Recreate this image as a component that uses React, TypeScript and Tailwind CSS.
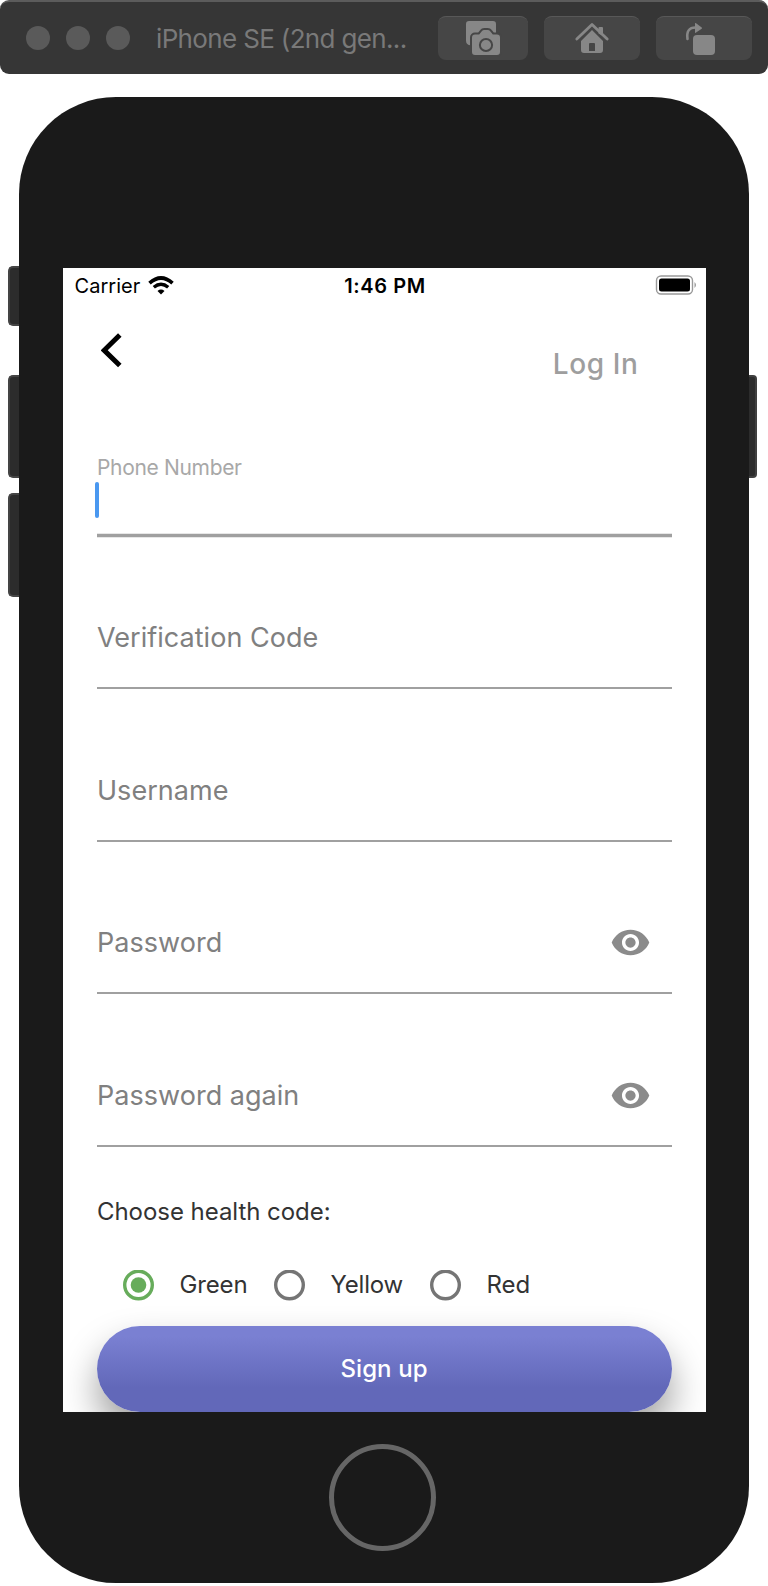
import React from "react";

function ToolButton({ className, children }: { className: string; children: React.ReactNode }) {
  return (
    <button
      className={`flex h-11 shrink-0 rounded-[8px] border-t border-[#585858] bg-[#464646] ${className}`}
    >
      {children}
    </button>
  );
}

function CameraIcon() {
  return (
    <svg width="90" height="44" viewBox="0 0 90 44" className="-mt-px">
      <path
        d="M31 5h24a3 3 0 0 1 3 3v14H32v7.200q-4-.3-4-4.700V8a3 3 0 0 1 3-3Z"
        fill="#878787"
      />
      <path
        d="M37 18.500h4.200l2.600-3.300q.9-1.200 2.500-1.200h3.400q1.600 0 2.500 1.200l2.600 3.300H59a3 3 0 0 1 3 3V36a3 3 0 0 1-3 3H37a3 3 0 0 1-3-3V21.500a3 3 0 0 1 3-3Z"
        fill="#878787"
        stroke="#464646"
        strokeWidth="4"
        paintOrder="stroke"
      />
      <circle cx="48" cy="29" r="6.100" fill="#878787" stroke="#464646" strokeWidth="2" />
    </svg>
  );
}

function HomeIcon() {
  return (
    <svg width="96" height="44" viewBox="0 0 96 44" className="-mt-px">
      <path
        d="M37 25 48 14 59 25v9a3 3 0 0 1-3 3h-5v-9a1 1 0 0 0-1-1h-4a1 1 0 0 0-1 1v9h-5a3 3 0 0 1-3-3Z"
        fill="#878787"
      />
      <path d="M44.500 35h7v2h-7Z" fill="#878787" />
      <path d="M54.500 17.500V12a1 1 0 0 1 1-1H58a1 1 0 0 1 1 1v8Z" fill="#878787" />
      <path
        d="M32.800 23 48 8.500 63.200 23"
        fill="none"
        stroke="#878787"
        strokeWidth="2.800"
        strokeLinecap="round"
        strokeLinejoin="round"
      />
    </svg>
  );
}

function RotateIcon() {
  return (
    <svg width="96" height="44" viewBox="0 0 96 44" className="-mt-px">
      <rect x="37" y="19" width="22" height="20" rx="4" fill="#878787" />
      <path d="M31.500 23q-1.700-11.500 8-11.500" fill="none" stroke="#878787" strokeWidth="2.600" strokeLinecap="round" />
      <path d="M39 7.500v9q0 .8.700.3l6-4.100q.8-.6 0-1.200l-6-4.400q-.7-.4-.7.400Z" fill="#878787" />
    </svg>
  );
}

function TitleBar() {
  return (
    <header className="flex h-[74px] items-center rounded-[9px] border-t-2 border-[#5c5c5c] bg-[#363636] pr-4 pl-[26px]">
      <div className="flex gap-4">
        <i className="size-6 rounded-full bg-[#5a5a5a]" />
        <i className="size-6 rounded-full bg-[#5a5a5a]" />
        <i className="size-6 rounded-full bg-[#5a5a5a]" />
      </div>
      <h1 className="ml-[26px] w-[282px] pt-[2px] text-[26px] leading-8 whitespace-nowrap tracking-[-0.650px] text-[#797979]">
        iPhone SE (2nd gen...
      </h1>
      <div className="flex gap-4">
        <ToolButton className="w-[90px]">
          <CameraIcon />
        </ToolButton>
        <ToolButton className="w-24">
          <HomeIcon />
        </ToolButton>
        <ToolButton className="w-24">
          <RotateIcon />
        </ToolButton>
      </div>
    </header>
  );
}

function StatusBar() {
  return (
    <div className="grid h-9 grid-cols-[1fr_auto_1fr] items-center pr-[9px] pl-[11px] text-[20px] leading-6 text-black">
      <div className="flex items-center gap-2">
        <span className="ml-px tracking-[0.050px]">Carrier</span>
        <svg width="26" height="19" viewBox="0 0 26 19">
          <path d="M1.500 7.200q11.500-10.400 23 0" fill="none" stroke="#000" strokeWidth="3.600" />
          <path d="M5.800 11.300q7.200-6 14.400 0" fill="none" stroke="#000" strokeWidth="3.400" />
          <path d="M9.500 15q3.500-2.800 7 0L13 18.600Z" fill="#000" />
        </svg>
      </div>
      <span className="font-semibold tracking-[0.600px]">1:46 PM</span>
      <svg width="42" height="20" viewBox="0 0 42 20" className="-mt-[2px] justify-self-end">
        <rect x="1.500" y="1" width="36" height="18" rx="4.500" fill="none" stroke="#999" strokeWidth="1.400" />
        <rect x="4" y="3.500" width="31" height="13" rx="2.500" fill="#000" />
        <path d="M39.500 7q3 3 0 6Z" fill="#999" />
      </svg>
    </div>
  );
}

function EyeIcon() {
  return (
    <svg width="41" height="41" viewBox="0 0 24 24" className="mr-[21px]">
      <path
        fill="#8b8b8b"
        d="M12 4.500C7 4.500 2.730 7.610 1 12c1.730 4.390 6 7.500 11 7.500s9.270-3.110 11-7.500c-1.730-4.390-6-7.500-11-7.500zM12 17c-2.760 0-5-2.240-5-5s2.240-5 5-5 5 2.240 5 5-2.240 5-5 5zm0-8c-1.660 0-3 1.340-3 3s1.340 3 3 3 3-1.340 3-3-1.340-3-3-3z"
      />
    </svg>
  );
}

function Field({ label, secure = false }: { label: string; secure?: boolean }) {
  return (
    <div className="flex h-[152.700px] flex-col justify-end">
      <div className="flex h-[101px] items-center justify-between border-b-2 border-[#a0a0a0] pl-[0.500px]">
        <span className="pt-px text-[27px] leading-8 tracking-[0.030px] text-[#808080]">{label}</span>
        {secure && <EyeIcon />}
      </div>
    </div>
  );
}

function Radio({ checked = false }: { checked?: boolean }) {
  return (
    <svg width="31" height="31" viewBox="0 0 31 31" className={checked ? "text-[#67ac5b]" : "text-[#757575]"}>
      <circle cx="15.500" cy="15" r="13.800" fill="none" stroke="currentColor" strokeWidth="3.400" />
      {checked && <circle cx="15.500" cy="15" r="7.800" fill="currentColor" />}
    </svg>
  );
}

function Screen() {
  return (
    <main className="flex h-[1144px] w-[643px] flex-col overflow-hidden bg-white">
      <StatusBar />
      <nav className="flex h-[96px] justify-between pr-[67px] pl-[38px]">
        <svg width="22" height="36" viewBox="0 0 22 36" className="mt-7">
          <path d="M18.800 3 3.200 18.300 18.800 33.500" fill="none" stroke="#000" strokeWidth="5" />
        </svg>
        <span className="mt-[42px] text-[28px] leading-9 font-medium tracking-[0.600px] text-[#9e9e9e]">Log In</span>
      </nav>
      <form className="flex flex-col px-[34px]">
        <div className="flex h-[138px] flex-col pt-[57px]">
          <label className="pl-[0.500px] text-[21px] leading-[26px] tracking-[-0.330px] text-[#a8a8a8]">
            Phone Number
          </label>
          <i className="mt-px -ml-[1.500px] h-9 w-[3.500px] shrink-0 rounded-full bg-[#4a98f0]" />
          <svg width="575" height="6" viewBox="0 0 575 6" className="mt-[14px] shrink-0">
            <path d="M0 3.500h575" stroke="#a0a0a0" strokeWidth="3.600" />
          </svg>
        </div>
        <Field label="Verification Code" />
        <Field label="Username" />
        <Field label="Password" secure />
        <Field label="Password again" secure />
        <p className="mt-[49px] pl-[0.500px] text-[24px] leading-8 tracking-[-0.050px] text-[#333]">
          Choose health code:
        </p>
        <div className="mt-[35px] flex h-[44px] items-center pl-[26px] text-[24px] leading-8 text-[#333]">
          <Radio checked />
          <span className="ml-[26px] w-[94px] tracking-[-0.150px]">Green</span>
          <Radio />
          <span className="ml-[26px] w-[99px] tracking-[-0.200px]">Yellow</span>
          <Radio />
          <span className="ml-[26px]">Red</span>
        </div>
        <button
          type="button"
          className="mt-[19px] h-[86px] rounded-full bg-linear-to-b from-[#7a80d2] from-12% to-[#6268b9] to-72% text-[24px] leading-8 font-medium tracking-[0.100px] text-white shadow-[0_20px_36px_rgba(0,0,0,0.38)]"
        >
          Sign up
        </button>
      </form>
    </main>
  );
}

export default function App() {
  return (
    <div className="h-[1586px] w-[768px] overflow-hidden bg-white font-[Inter,'Liberation_Sans',sans-serif]">
      <TitleBar />
      <div className="mt-[23px] flex pl-2">
        <div className="flex w-[11px] shrink-0 flex-col pt-[169px]">
          <i className="h-[60px] rounded-l-[5px] border-2 border-r-0 border-[#444] bg-[#2c2c2c]" />
          <i className="mt-[49px] h-[103px] rounded-l-[5px] border-2 border-r-0 border-[#444] bg-[#2c2c2c]" />
          <i className="mt-[15px] h-[104px] rounded-l-[5px] border-2 border-r-0 border-[#444] bg-[#2c2c2c]" />
        </div>
        <div className="flex h-[1486px] w-[730px] shrink-0 flex-col items-center rounded-[97px] bg-[#1a1a1a] pt-[171px]">
          <Screen />
          <i className="mt-8 mr-[4px] size-[107px] rounded-full border-[5px] border-[#666]" />
        </div>
        <i className="mt-[278px] h-[103px] w-2 shrink-0 rounded-r-[4px] border-2 border-l-0 border-[#404040] bg-[#2c2c2c]" />
      </div>
    </div>
  );
}
